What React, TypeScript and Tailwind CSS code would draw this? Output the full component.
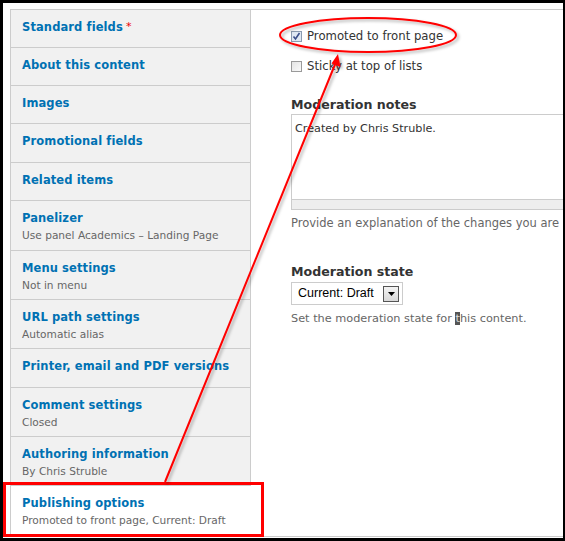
import React from "react";

const items: { title: string; summary?: string; req?: boolean; h: number }[] = [
  { title: "Standard fields", req: true, h: 39 },
  { title: "About this content", h: 38 },
  { title: "Images", h: 38 },
  { title: "Promotional fields", h: 39 },
  { title: "Related items", h: 38 },
  { title: "Panelizer", summary: "Use panel Academics – Landing Page", h: 50 },
  { title: "Menu settings", summary: "Not in menu", h: 49 },
  { title: "URL path settings", summary: "Automatic alias", h: 49 },
  { title: "Printer, email and PDF versions", h: 39 },
  { title: "Comment settings", summary: "Closed", h: 49 },
  { title: "Authoring information", summary: "By Chris Struble", h: 49 },
];

const font = { fontFamily: '"DejaVu Sans", Verdana, sans-serif' };

export default function App() {
  return (
    <div className="relative w-[565px] h-[541px] bg-black pt-[3px] pl-[3px] pr-[2px] pb-[3px]" style={font}>
      <div className="w-full h-full bg-white pl-[7px] pt-[6px] overflow-hidden">
        <div className="flex h-[528px] border-t border-b border-[#ccc]">
          {/* sidebar */}
          <div className="w-[241px] shrink-0 flex flex-col bg-[#f1f1f1] border-l border-[#ccc] whitespace-nowrap">
            {items.map((it, i) => (
              <div
                key={i}
                className="shrink-0 border-b border-r border-[#ccc] pl-[11px] pt-[9px]"
                style={{ height: i === 0 ? it.h - 1 : it.h }}
              >
                <div className="text-[11.5px] leading-[16px] font-bold text-[#0071b3] tracking-[0.1px]">
                  {it.title}
                  {it.req && <span className="text-[#e00] font-normal text-[11px] ml-[3px] align-top">*</span>}
                </div>
                {it.summary && (
                  <div className="text-[10.6px] leading-[16px] text-[#666] mt-[1px]">{it.summary}</div>
                )}
              </div>
            ))}
            <div className="flex-1 bg-white pl-[11px] pt-[9px]">
              <div className="text-[11.5px] leading-[16px] font-bold text-[#0071b3] tracking-[0.1px]">Publishing options</div>
              <div className="text-[10.6px] leading-[16px] text-[#666] mt-[1px]">Promoted to front page, Current: Draft</div>
            </div>
          </div>
          {/* content */}
          <div className="flex-1 min-w-0 overflow-hidden pl-[40px] pt-[20px] text-[11.7px] text-[#333]">
            <label className="flex items-center h-[13px]">
              <span className="shrink-0 w-[11px] h-[11px] border border-[#8a9bb0] bg-[#dfe8f3] flex items-center justify-center">
                <svg width="9" height="9" viewBox="0 0 9 9">
                  <path d="M1.5 4.5 L3.5 7 L7.5 1" stroke="#3b4f8a" strokeWidth="1.6" fill="none" />
                </svg>
              </span>
              <span className="ml-[5px] whitespace-nowrap">Promoted to front page</span>
            </label>
            <label className="flex items-center h-[13px] mt-[17px]">
              <span className="shrink-0 w-[11px] h-[11px] border border-[#9a9a9a] bg-gradient-to-br from-[#e4e4e4] to-[#fafafa]" />
              <span className="ml-[5px] whitespace-nowrap">Sticky at top of lists</span>
            </label>
            <div className="mt-[24px] font-bold text-[12.6px] leading-[16px] text-[#333] whitespace-nowrap">Moderation notes</div>
            <div className="mt-[1px] w-[400px] border border-[#ccc]">
              <div className="h-[84px] px-[3px] pt-[6px] text-[11.2px] text-[#333] whitespace-nowrap">Created by Chris Struble.</div>
              <div className="h-[10px] bg-[#eee] border-t border-[#ccc]" />
            </div>
            <div className="mt-[5px] text-[11.5px] leading-[16px] text-[#666] whitespace-nowrap">
              Provide an explanation of the changes you are making.
            </div>
            <div className="mt-[33px] font-bold text-[12.6px] leading-[16px] text-[#333] whitespace-nowrap">Moderation state</div>
            <div className="mt-[2px] w-[112px] h-[23px] border border-[#ccc] flex items-center pl-[6px] pr-[3px] justify-between">
              <span className="text-[12.5px] text-black whitespace-nowrap" style={{ fontFamily: '"Liberation Sans", Arial, sans-serif' }}>
                Current: Draft
              </span>
              <span className="shrink-0 w-[16px] h-[16px] border border-[#555] bg-gradient-to-b from-[#f4f4f4] to-[#d8d8d8] flex items-center justify-center">
                <svg width="7" height="4" viewBox="0 0 7 4">
                  <path d="M0 0 H7 L3.5 4 Z" fill="#000" />
                </svg>
              </span>
            </div>
            <div className="mt-[6px] text-[11.3px] leading-[16px] text-[#666] whitespace-nowrap">
              Set the moderation state for <span className="bg-[#555] text-[#ddd]">t</span>his content.
            </div>
          </div>
        </div>
      </div>

      {/* annotations */}
      <div className="absolute left-[3px] top-[482px] w-[261px] h-[55px] border-[3px] border-[#f00]" />
      <svg className="absolute left-0 top-0 pointer-events-none" width="565" height="541">
        <defs>
          <filter id="sh" x="-10%" y="-10%" width="130%" height="130%">
            <feDropShadow dx="2" dy="2" stdDeviation="1.5" floodColor="#000" floodOpacity="0.3" />
          </filter>
        </defs>
        <g filter="url(#sh)">
          <ellipse cx="368" cy="35" rx="88" ry="17" fill="none" stroke="#f00" strokeWidth="2" />
          <line x1="165" y1="482" x2="336" y2="62" stroke="#f00" strokeWidth="2" />
          <path d="M338 54 L340.5 67 L331.5 63.5 Z" fill="#f00" />
        </g>
      </svg>
    </div>
  );
}
